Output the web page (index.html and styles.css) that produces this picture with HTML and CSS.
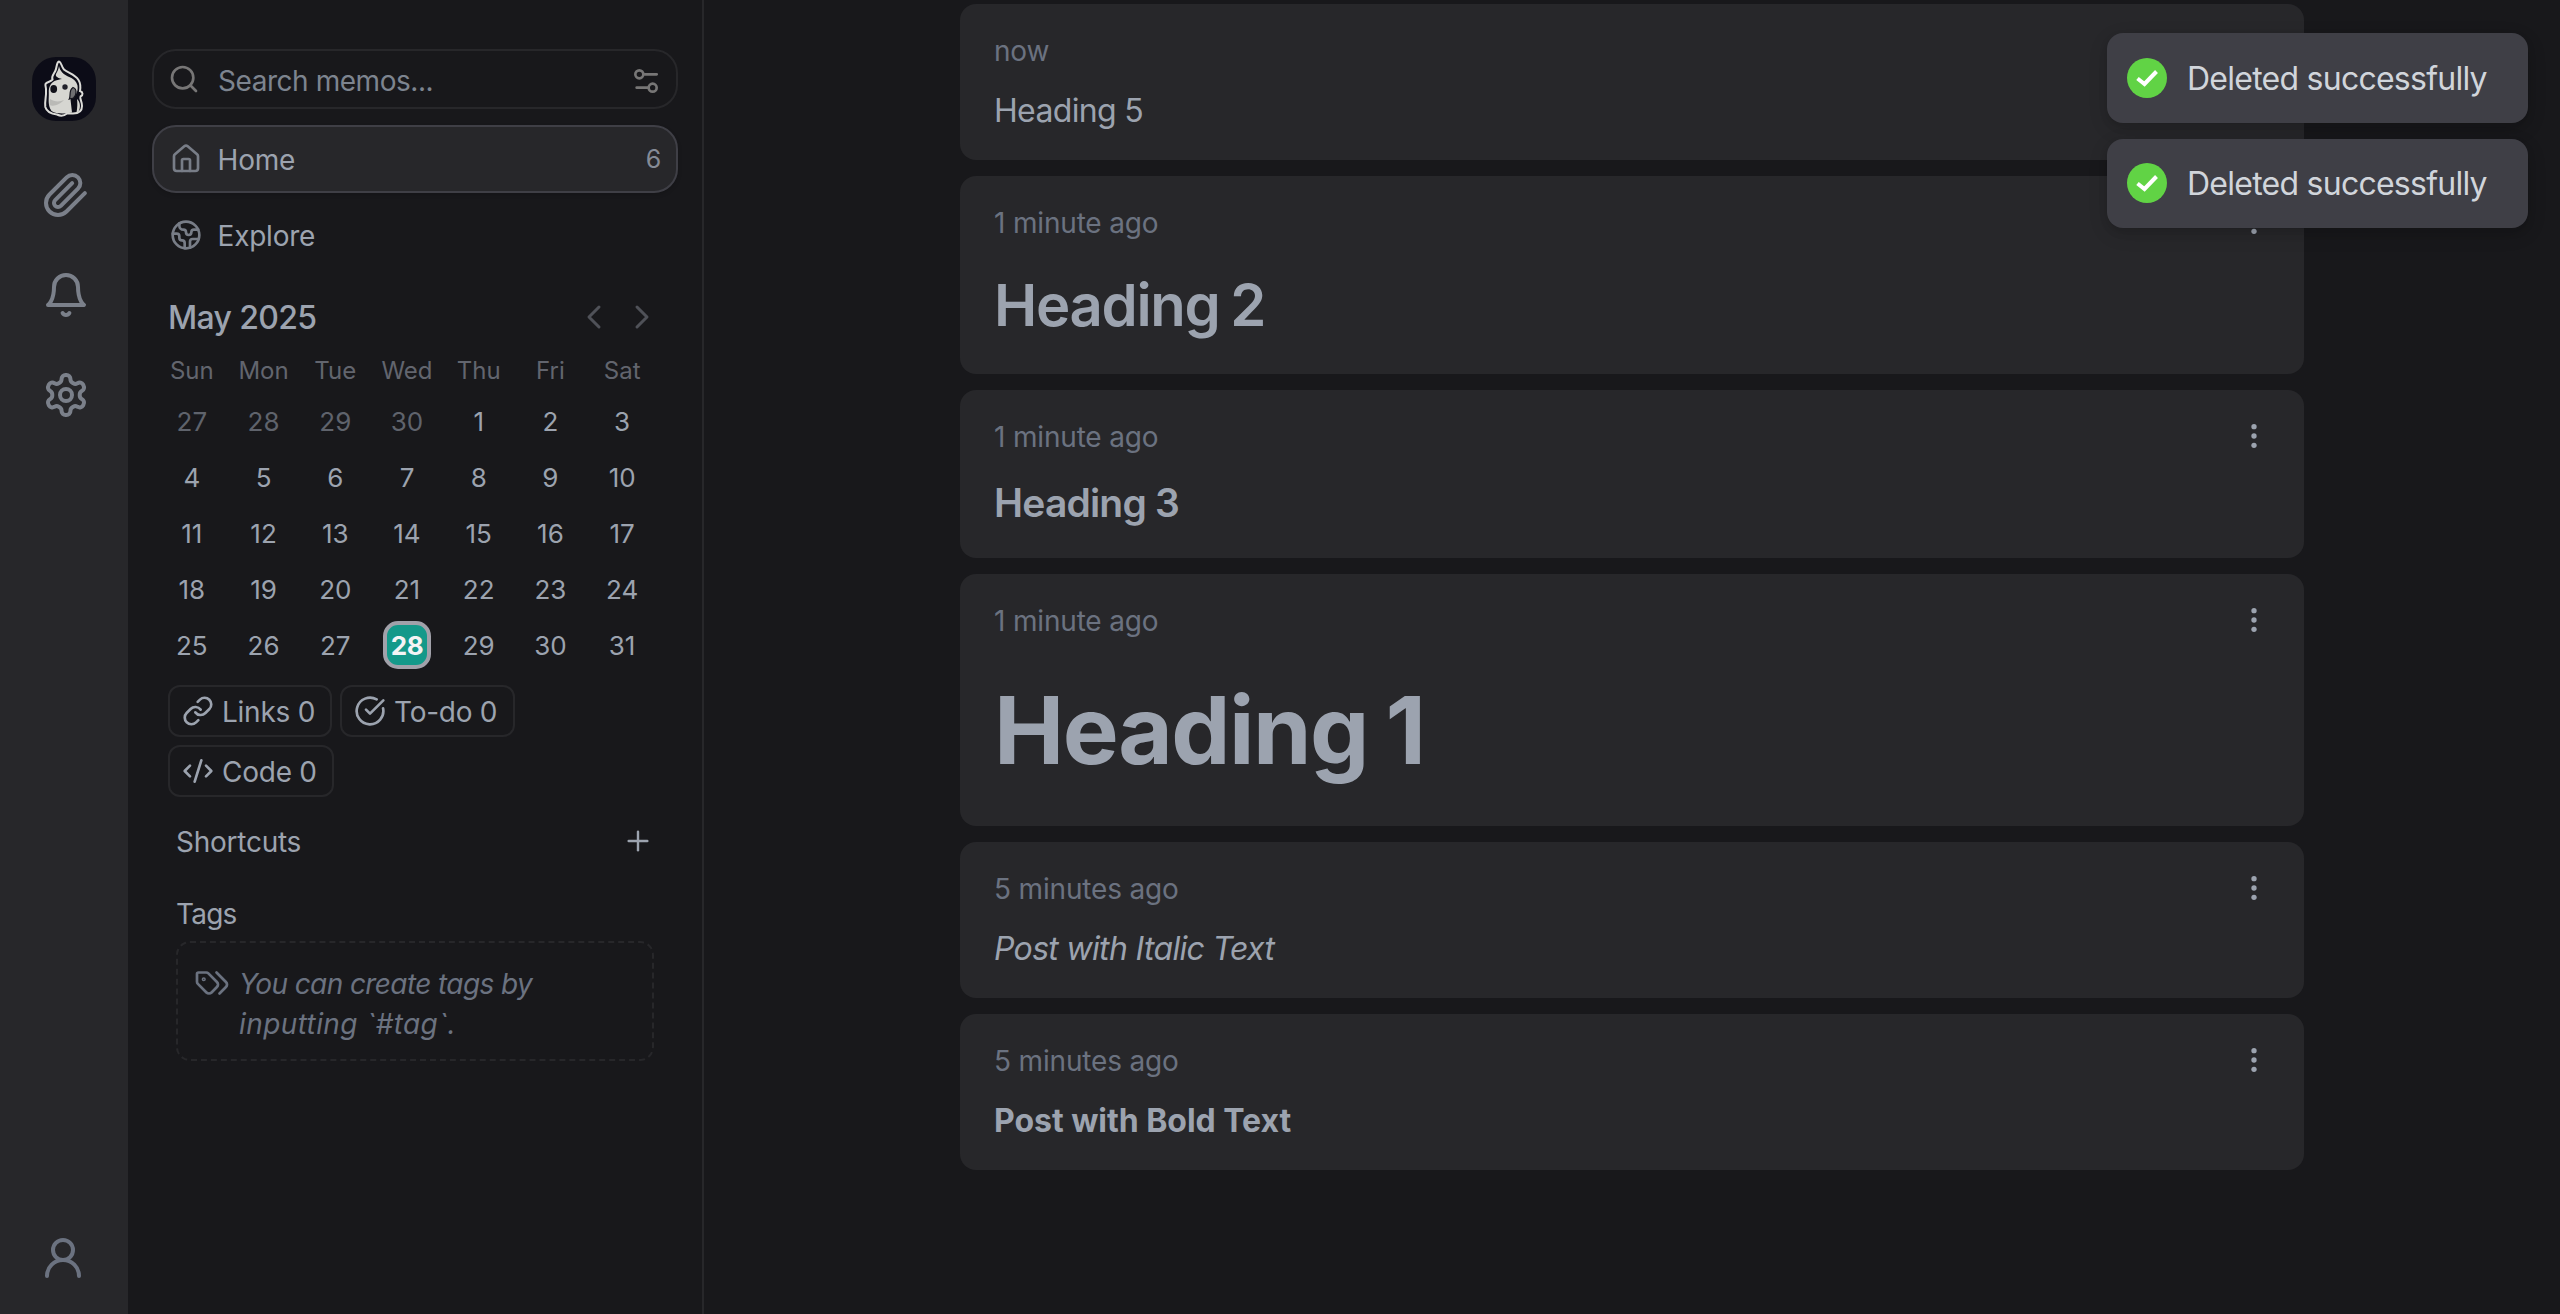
FILE: index.html
```html
<!DOCTYPE html>
<html lang="en">
<head>
<meta charset="utf-8">
<title>Memos</title>
<link rel="stylesheet" href="styles.css">
</head>
<body>
<div class="app">
  <nav class="rail">
    <svg class="logo" viewBox="0 0 64 64">
      <rect width="64" height="64" rx="24" fill="#0c0c17"/>
      <path d="M27 4.500C29.500 5 29 9 32 12.500C36 16 43 17.500 46.500 23C49 27 48.500 31 48 34C51 35 51.500 38 48.500 39.500C47.500 42 50 44 50 49C50 55 46 56.500 41 56.500H35C32 59 28 59 25 57.500C20 57 15 56 13.300 50C12.500 44 14.500 39 14 34C14.500 31 13 29 13.500 27C15 24.500 18 25.500 20.500 22.500C19 19 22 17 23.500 13.500C25 10 24.500 5 27 4.500Z" fill="#0c0c17" stroke="#dcdcd8" stroke-width="2"/>
      <path d="M27 9C28 14 31 17 36 19.500C41 21.500 44.500 24 45.500 28.500C46 32 45.500 35 43.500 38L38.500 42.500L40 55.500C33 57 24 57 19.500 54C15.500 48 17 42 16.800 36C16.500 30 18.500 26.500 22.500 24C25.500 22.500 28 22.500 30 22C26 21 23 19.500 24 17C25.500 14.500 26.500 12 27 9Z" fill="#d6d6d1"/>
      <path d="M45 42C48.500 45 49 51 46 55.500H44.500C45.500 50 45.500 46 45 42Z" fill="#d6d6d1"/>
      <path d="M18 42C22 45 28 45 32 43C28 47 22 50 17.500 48Z" fill="#9d9d9b" opacity=".5"/>
      <ellipse cx="21.700" cy="32" rx="3.400" ry="4" fill="#111119"/>
      <circle cx="33" cy="30" r="2.700" fill="#20202a"/>
      <path d="M37.300 42C39 39 36.500 33 41 30.500C45 31.500 45 38 41.500 41Z" fill="#6f6f72" stroke="#15151d" stroke-width="1.200"/>
    </svg>
    <svg class="ico rail-ico" viewBox="0 0 24 24"><path d="m21.440 11.050-9.190 9.190a6 6 0 0 1-8.490-8.490l8.570-8.570A4 4 0 1 1 18 8.840l-8.590 8.570a2 2 0 0 1-2.830-2.830l8.490-8.480"/></svg>
    <svg class="ico rail-ico" viewBox="0 0 24 24"><path d="M6 8a6 6 0 0 1 12 0c0 7 3 9 3 9H3s3-2 3-9"/><path d="M10.300 21a1.940 1.940 0 0 0 3.400 0"/></svg>
    <svg class="ico rail-ico" viewBox="0 0 24 24"><path d="M12.220 2h-.44a2 2 0 0 0-2 2v.18a2 2 0 0 1-1 1.730l-.43.25a2 2 0 0 1-2 0l-.15-.08a2 2 0 0 0-2.730.73l-.22.38a2 2 0 0 0 .73 2.730l.15.1a2 2 0 0 1 1 1.720v.51a2 2 0 0 1-1 1.740l-.15.09a2 2 0 0 0-.73 2.730l.22.38a2 2 0 0 0 2.730.73l.15-.08a2 2 0 0 1 2 0l.43.25a2 2 0 0 1 1 1.730V20a2 2 0 0 0 2 2h.44a2 2 0 0 0 2-2v-.18a2 2 0 0 1 1-1.730l.43-.25a2 2 0 0 1 2 0l.15.08a2 2 0 0 0 2.730-.73l.22-.39a2 2 0 0 0-.73-2.730l-.15-.08a2 2 0 0 1-1-1.740v-.5a2 2 0 0 1 1-1.740l.15-.09a2 2 0 0 0 .73-2.730l-.22-.38a2 2 0 0 0-2.730-.73l-.15.08a2 2 0 0 1-2 0l-.43-.25a2 2 0 0 1-1-1.730V4a2 2 0 0 0-2-2z"/><circle cx="12" cy="12" r="3"/></svg>
    <svg class="ico rail-ico user" viewBox="0 0 24 24"><circle cx="12" cy="8" r="5"/><path d="M20 21a8 8 0 0 0-16 0"/></svg>
  </nav>

  <aside class="sidebar">
    <div class="search">
      <svg class="ico" viewBox="0 0 24 24"><circle cx="11" cy="11" r="8"/><path d="m21 21-4.300-4.300"/></svg>
      <span class="search-text">Search memos...</span>
      <svg class="ico filter" viewBox="0 0 24 24"><path d="M20 7h-9"/><path d="M14 17H5"/><circle cx="17" cy="17" r="3"/><circle cx="7" cy="7" r="3"/></svg>
    </div>
    <a class="nav active">
      <svg class="ico" viewBox="0 0 24 24"><path d="M15 21v-8a1 1 0 0 0-1-1h-4a1 1 0 0 0-1 1v8"/><path d="M3 10a2 2 0 0 1 .709-1.528l7-5.999a2 2 0 0 1 2.582 0l7 5.999A2 2 0 0 1 21 10v9a2 2 0 0 1-2 2H5a2 2 0 0 1-2-2z"/></svg>
      <span>Home</span><span class="count">6</span>
    </a>
    <a class="nav">
      <svg class="ico" viewBox="0 0 24 24"><path d="M21.540 15H17a2 2 0 0 0-2 2v4.540"/><path d="M7 3.340V5a3 3 0 0 0 3 3a2 2 0 0 1 2 2c0 1.100.9 2 2 2a2 2 0 0 0 2-2c0-1.100.9-2 2-2h3.170"/><path d="M11 21.950V18a2 2 0 0 0-2-2a2 2 0 0 1-2-2v-1a2 2 0 0 0-2-2H2.050"/><circle cx="12" cy="12" r="10"/></svg>
      <span>Explore</span>
    </a>

    <section class="calendar">
      <header class="cal-head">
        <span class="month">May 2025</span>
        <svg class="ico chev" viewBox="0 0 24 24"><path d="m15 18-6-6 6-6"/></svg>
        <svg class="ico chev" viewBox="0 0 24 24"><path d="m9 18 6-6-6-6"/></svg>
      </header>
      <div class="week names"><span>Sun</span><span>Mon</span><span>Tue</span><span>Wed</span><span>Thu</span><span>Fri</span><span>Sat</span></div>
      <div class="week"><span class="dim">27</span><span class="dim">28</span><span class="dim">29</span><span class="dim">30</span><span>1</span><span>2</span><span>3</span></div>
      <div class="week"><span>4</span><span>5</span><span>6</span><span>7</span><span>8</span><span>9</span><span>10</span></div>
      <div class="week"><span>11</span><span>12</span><span>13</span><span>14</span><span>15</span><span>16</span><span>17</span></div>
      <div class="week"><span>18</span><span>19</span><span>20</span><span>21</span><span>22</span><span>23</span><span>24</span></div>
      <div class="week"><span>25</span><span>26</span><span>27</span><b class="today">28</b><span>29</span><span>30</span><span>31</span></div>
    </section>

    <div class="chips">
      <span class="chip links"><svg class="ico" viewBox="0 0 24 24"><path d="M10 13a5 5 0 0 0 7.540.54l3-3a5 5 0 0 0-7.070-7.070l-1.720 1.710"/><path d="M14 11a5 5 0 0 0-7.540-.54l-3 3a5 5 0 0 0 7.070 7.070l1.710-1.710"/></svg>Links 0</span>
      <span class="chip todo"><svg class="ico" viewBox="0 0 24 24"><path d="M21.801 10A10 10 0 1 1 17 3.335"/><path d="m9 11 3 3L22 4"/></svg>To-do 0</span>
      <span class="chip code"><svg class="ico" viewBox="0 0 24 24"><path d="m18 16 4-4-4-4"/><path d="m6 8-4 4 4 4"/><path d="m14.500 4-5 16"/></svg>Code 0</span>
    </div>

    <div class="section shortcuts"><span>Shortcuts</span><svg class="ico" viewBox="0 0 24 24"><path d="M5 12h14"/><path d="M12 5v14"/></svg></div>
    <div class="section tags">Tags</div>
    <div class="hint">
      <svg class="ico" viewBox="0 0 24 24"><path d="m15 5 6.300 6.300a2.400 2.400 0 0 1 0 3.400L17 19"/><path d="M9.586 5.586A2 2 0 0 0 8.172 5H3a1 1 0 0 0-1 1v5.172a2 2 0 0 0 .586 1.414L8.290 18.290a2.426 2.426 0 0 0 3.420 0l3.580-3.580a2.426 2.426 0 0 0 0-3.420z"/><circle cx="6.500" cy="9.500" r=".5"/></svg>
      <p><span class="line">You can create tags by</span> <span class="line wide">inputting `#tag`.</span></p>
    </div>
  </aside>

  <main class="feed">
    <article class="card"><div class="meta"><time>now</time><svg class="dots" viewBox="0 0 24 24"><circle cx="12" cy="5" r="2"/><circle cx="12" cy="12" r="2"/><circle cx="12" cy="19" r="2"/></svg></div><h5>Heading 5</h5></article>
    <article class="card"><div class="meta"><time>1 minute ago</time><svg class="dots" viewBox="0 0 24 24"><circle cx="12" cy="5" r="2"/><circle cx="12" cy="12" r="2"/><circle cx="12" cy="19" r="2"/></svg></div><h2>Heading 2</h2></article>
    <article class="card"><div class="meta"><time>1 minute ago</time><svg class="dots" viewBox="0 0 24 24"><circle cx="12" cy="5" r="2"/><circle cx="12" cy="12" r="2"/><circle cx="12" cy="19" r="2"/></svg></div><h3>Heading 3</h3></article>
    <article class="card"><div class="meta"><time>1 minute ago</time><svg class="dots" viewBox="0 0 24 24"><circle cx="12" cy="5" r="2"/><circle cx="12" cy="12" r="2"/><circle cx="12" cy="19" r="2"/></svg></div><h1>Heading 1</h1></article>
    <article class="card"><div class="meta"><time>5 minutes ago</time><svg class="dots" viewBox="0 0 24 24"><circle cx="12" cy="5" r="2"/><circle cx="12" cy="12" r="2"/><circle cx="12" cy="19" r="2"/></svg></div><p><em>Post with Italic Text</em></p></article>
    <article class="card"><div class="meta"><time>5 minutes ago</time><svg class="dots" viewBox="0 0 24 24"><circle cx="12" cy="5" r="2"/><circle cx="12" cy="12" r="2"/><circle cx="12" cy="19" r="2"/></svg></div><p><strong>Post with Bold Text</strong></p></article>
  </main>
</div>

<div class="toasts">
  <div class="toast"><svg viewBox="0 0 40 40"><circle cx="20" cy="20" r="20"/><path d="M10.500 20.500 17.500 26 29.500 13.500"/></svg>Deleted successfully</div>
  <div class="toast"><svg viewBox="0 0 40 40"><circle cx="20" cy="20" r="20"/><path d="M10.500 20.500 17.500 26 29.500 13.500"/></svg>Deleted successfully</div>
</div>
</body>
</html>
```
FILE: styles.css
```css
* { box-sizing: border-box; }

body {
  margin: 0;
  background: #18181b;
  color: #9ca3af;
  font: 430 28px/40px Inter, sans-serif;
  letter-spacing: -0.25px;
  overflow: hidden;
}

h1, h2, h3, h5, p { margin: 0; }

.app { display: flex; height: 1314px; }

.ico {
  width: 32px;
  height: 32px;
  flex: none;
  fill: none;
  stroke: currentColor;
  stroke-width: 2;
  stroke-linecap: round;
  stroke-linejoin: round;
}

/* Icon rail */
.rail {
  width: 128px;
  flex: none;
  display: flex;
  flex-direction: column;
  gap: 52px;
  padding: 57px 0 32px 42px;
  background: #27272a;
  color: #7b808a;
}
.logo { width: 64px; height: 64px; margin: 0 0 -2px -10px; flex: none; }
.rail-ico { width: 48px; height: 48px; stroke-width: 2; }
.user { margin-top: auto; margin-left: -3px; color: #6b7280; }

/* Sidebar */
.sidebar {
  width: 576px;
  flex: none;
  padding: 49px 24px 0;
  border-right: 2px solid #27272a;
}

.search {
  display: flex;
  align-items: center;
  width: 526px;
  height: 60px;
  padding: 0 14px;
  border: 2px solid #27272a;
  border-radius: 24px;
  color: #777676;
}
.search-text { margin: 3px auto 0 18px; color: #7d848f; letter-spacing: -0.45px; }
.filter { margin-top: 4px; }

.nav {
  display: flex;
  align-items: center;
  width: 526px;
  height: 68px;
  margin-top: 8px;
  padding: 0 16px;
  border: 2px solid transparent;
  border-radius: 24px;
}
.nav .ico { color: #787d87; }
.nav span { margin: 2px 0 0 15.600px; }
.nav .count { margin: 0 -1px 0 auto; font-size: 25px; color: #858b96; }
.active {
  margin-top: 16px;
  background: #27272a;
  border-color: #3f3f46;
  box-shadow: 0 2px 4px rgba(0, 0, 0, .15);
}

/* Calendar */
.calendar { width: 502px; margin: 24px 0 0 4px; }
.cal-head { display: flex; align-items: center; gap: 8px; height: 48px; padding: 0 0 0 12px; }
.month { margin: 2px auto 0 0; font-size: 32px; font-weight: 520; letter-spacing: -0.65px; }
.chev { width: 40px; height: 40px; stroke-width: 1.8; color: #4f5158; }
.chev:last-child { margin-right: -4px; }
.week {
  display: grid;
  grid-template-columns: repeat(7, 1fr);
  align-items: center;
  justify-items: center;
  height: 56px;
  padding-top: 2px;
  font-size: 26px;
  letter-spacing: 0;
}
.names { height: 40px; margin: 8px 0 4px; font-size: 24px; color: #62656e; }
.dim { color: #5f636c; }
.today {
  width: 48px;
  height: 48px;
  margin-top: -2px;
  border: 4px solid #a1a1aa;
  border-radius: 15px;
  background: #14998a;
  color: #f4f4f5;
  font-weight: 700;
  text-align: center;
  line-height: 42px;
  letter-spacing: -0.3px;
}

/* Filter chips */
.chips { display: flex; flex-wrap: wrap; gap: 8px; width: 400px; margin: 12px 0 0 16px; }
.chip {
  display: flex;
  align-items: center;
  gap: 8px;
  height: 52px;
  padding: 2px 12px 0;
  border: 2px solid #27272a;
  border-radius: 12px;
  white-space: nowrap;
}
.chip .ico { margin-top: -2px; }
.links { width: 164px; }
.todo { width: 175px; }
.code { width: 166px; }

.section { display: flex; justify-content: space-between; align-items: center; width: 478px; height: 40px; margin-left: 24px; }
.shortcuts { margin-top: 25px; }
.shortcuts .ico { margin-top: -2px; stroke-width: 1.8; }
.tags { margin-top: 32px; letter-spacing: -0.8px; }

.hint {
  display: flex;
  gap: 9px;
  width: 478px;
  height: 120px;
  margin: 7px 0 0 24px;
  padding: 21px 16px 0;
  border: 2px dashed #27272a;
  border-radius: 14px;
  color: #6b7280;
  font-style: italic;
}
.hint .ico { width: 36px; height: 36px; margin-top: 1px; stroke-width: 1.8; }
.line { display: block; letter-spacing: -0.6px; }
.wide { letter-spacing: 0.4px; }

/* Memo feed */
.feed { flex: 1; display: flex; flex-direction: column; align-items: flex-start; gap: 16px; padding: 4px 0 0 256px; }
.card { width: 1344px; padding: 27px 34px 26px; border-radius: 16px; background: #27272a; }
.meta { display: flex; justify-content: space-between; height: 40px; color: #6b7280; letter-spacing: -0.17px; }
.dots { width: 32px; height: 32px; margin: 3px 0 0; fill: #9ca3af; }
.card h5, .card p { margin: 16px 0 -1px; font-size: 32px; font-weight: 430; line-height: 48px; letter-spacing: -0.67px; }
.card strong { font-weight: 700; letter-spacing: -0.03px; }
.card h3 { margin: 18px 0 1px; font-size: 39px; font-weight: 600; line-height: 56px; letter-spacing: -0.82px; }
.card h2 { margin: 26px 0 7px; font-size: 58px; font-weight: 600; line-height: 72px; letter-spacing: -1.3px; word-spacing: -2.500px; }
.card h1 { margin: 39px 0 20px; font-size: 94px; font-weight: 730; line-height: 100px; letter-spacing: -1.5px; word-spacing: -3px; }

/* Toasts float over the feed */
.toasts { position: absolute; top: 33px; right: 32px; display: flex; flex-direction: column; gap: 16px; }
.toast {
  display: flex;
  align-items: center;
  width: 421px;
  height: 89.500px;
  padding: 2px 20px 0;
  border-radius: 16px;
  background: #3f3f46;
  color: #d1d5db;
  font-size: 32px;
  letter-spacing: -0.75px;
  white-space: nowrap;
  box-shadow: 0 6px 20px rgba(0, 0, 0, .12), 0 4px 8px rgba(0, 0, 0, .1);
}
.toast svg { width: 40px; height: 40px; margin: -2px 20px 0 0; fill: #61d345; }
.toast path { fill: none; stroke: #fff; stroke-width: 4; }
```
